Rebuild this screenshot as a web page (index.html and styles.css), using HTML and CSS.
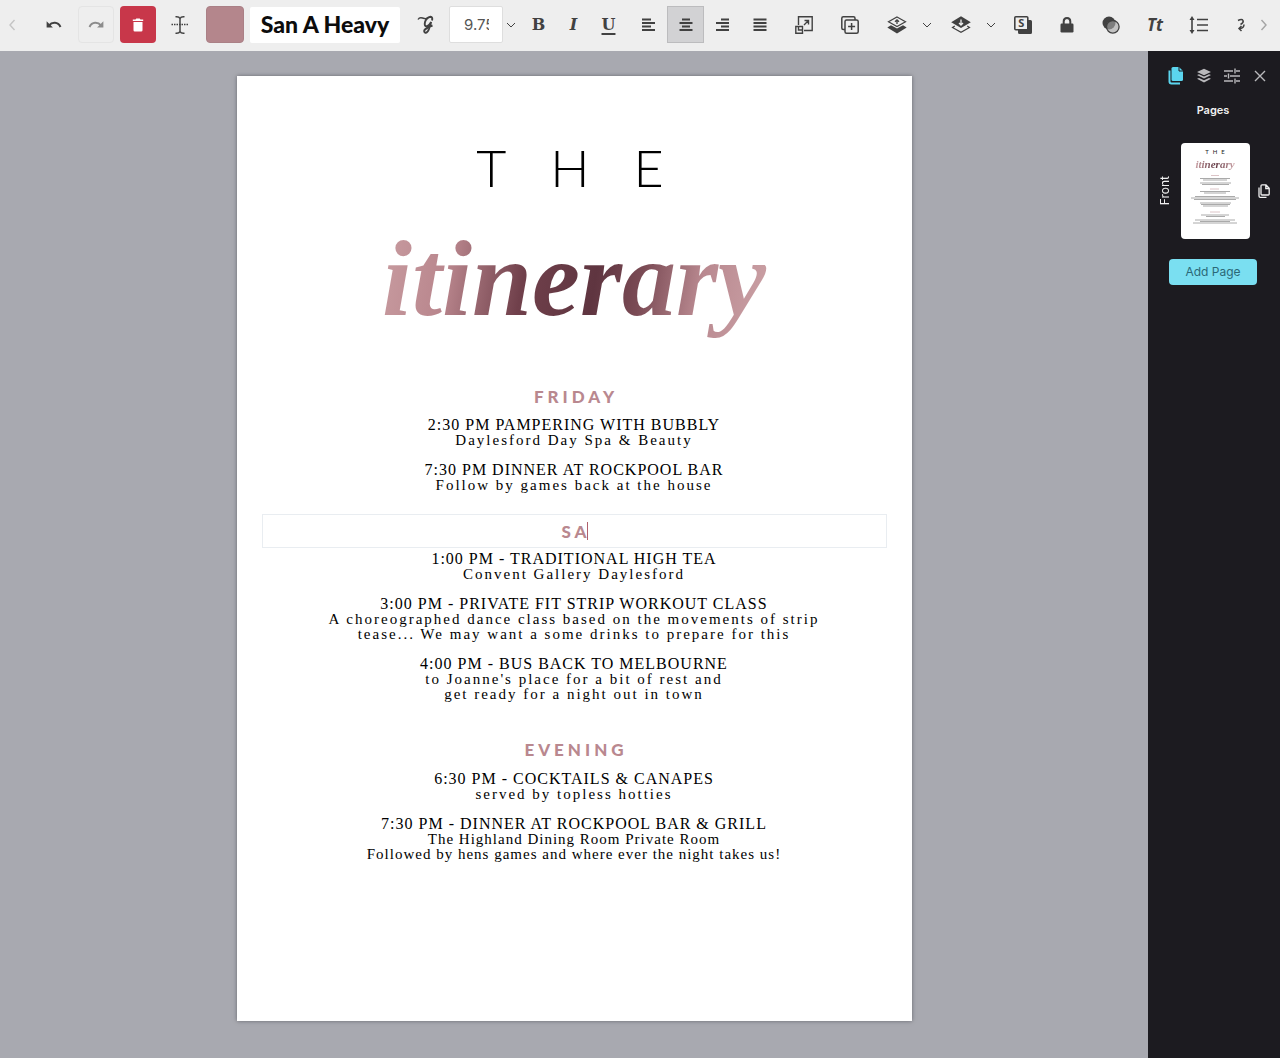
FILE: index.html
```html
<!DOCTYPE html>
<html lang="en">
<head>
<meta charset="utf-8">
<meta name="viewport" content="width=device-width, initial-scale=1">
<title>Itinerary editor</title>
<link rel="stylesheet" href="styles.css">
</head>
<body>
<header class="toolbar">
  <button class="scroll-btn" aria-label="Scroll left"><svg width="8" height="14" viewBox="0 0 8 14"><path d="M6.500 2 2 7l4.500 5" stroke-width="1.400"/></svg></button>
  <div class="group edit">
    <button class="tool" aria-label="Undo"><svg width="16" height="10" viewBox="0 0 16 10"><path d="M3 5.500C6 1.800 12 1.600 14.500 7" stroke-width="2"/><path class="solid" d="M.6 1.200v6.300h6.300z"/></svg></button>
    <button class="tool framed" aria-label="Redo"><svg width="16" height="10" viewBox="0 0 16 10"><path d="M13 5.500C10 1.800 4 1.600 1.500 7" stroke-width="2"/><path class="solid" d="M15.400 1.200v6.300H9.100z"/></svg></button>
    <button class="tool danger" aria-label="Delete"><svg width="12" height="14" viewBox="0 0 12 14"><path class="solid" d="M1.500 4h9v8.200q0 1.300-1.300 1.300H2.800q-1.300 0-1.300-1.300zM.8 1.500H3.500L4.300.5h3.400l.8 1h2.700V3H.8z"/></svg></button>
    <button class="tool" aria-label="Edit text"><svg width="18" height="20" viewBox="0 0 18 20"><path d="M4.500 1.700q3.500-.4 4.500 1.800 1-2.200 4.500-1.800M9 3.500v13M4.500 18.300q3.500.4 4.500-1.800 1 2.200 4.500 1.800" stroke-width="1.500"/><path d="M.5 9.500h17" stroke-width="1.300" stroke-dasharray="1.500 1"/></svg></button>
  </div>
  <button class="swatch" aria-label="Text colour"></button>
  <button class="font-picker">San A Heavy</button>
  <button class="tool glyphs" aria-label="Glyphs"><svg width="18" height="20" viewBox="0 0 18 20"><path d="M1 4.500Q2.500 2 5.500 3T10 3.500" stroke-width="1.400"/><path d="M15 5.500Q16 2 13.500 1.800 9.500 2.500 8 7 7 11.500 9.800 11.300 12.500 10.500 14.200 7L12 14Q10.500 18 8.500 17.800 6.500 17 7.500 15 9.500 12.800 15.500 10.500" stroke-width="1.900"/></svg></button>
  <input class="size-input" type="text" value="9.75" aria-label="Font size">
  <button class="drop" aria-label="Font size list"><svg width="10" height="6" viewBox="0 0 10 6"><path d="m1 1 4 4 4-4"/></svg></button>
  <div class="group style">
    <button class="tool letter" aria-label="Bold">B</button>
    <button class="tool letter slant" aria-label="Italic">I</button>
    <button class="tool letter under" aria-label="Underline">U</button>
  </div>
  <div class="group align">
    <button class="tool" aria-label="Align left"><svg width="14" height="14" viewBox="0 0 14 14"><path d="M0 1.500h9M0 5h13M0 8.500h9M0 12h13" stroke-width="1.800"/></svg></button>
    <button class="tool active" aria-label="Align centre" aria-pressed="true"><svg width="14" height="14" viewBox="0 0 14 14"><path d="M3 1.500h8M.5 5h13M3 8.500h8M.5 12h13" stroke-width="1.800"/></svg></button>
    <button class="tool" aria-label="Align right"><svg width="14" height="14" viewBox="0 0 14 14"><path d="M5 1.500h8M0 5h13M5 8.500h8M0 12h13" stroke-width="1.800"/></svg></button>
    <button class="tool" aria-label="Justify"><svg width="14" height="14" viewBox="0 0 14 14"><path d="M.5 1.500h13M.5 5h13M.5 8.500h13M.5 12h13" stroke-width="1.800"/></svg></button>
  </div>
  <button class="tool resize" aria-label="Resize"><svg width="18" height="18" viewBox="0 0 18 18"><path d="M3.500 9V.8H17.200v13.700H9M.8 10.500h6.700v6.700H.8zM3.500 10.500v3.500H7.500M9 9l4.500-4.500M9.500 4.500h4v4" stroke-width="1.400"/></svg></button>
  <button class="tool duplicate" aria-label="Duplicate"><svg width="18" height="18" viewBox="0 0 18 18"><path d="M3.500 13.500H2.300Q.8 13.500.8 12V2.300Q.8.800 2.300.8H12.500q1.500 0 1.500 1.500v1.200M5.500 4h10q1.700 0 1.700 1.500v10.200q0 1.500-1.700 1.500h-10Q4 17.200 4 15.700V5.500Q4 4 5.500 4zM10.600 7v7M7.100 10.500h7" stroke-width="1.500"/></svg></button>
  <div class="group arrange">
    <button class="tool" aria-label="Bring forward"><svg width="20" height="18" viewBox="0 0 20 18"><path class="solid" d="M.3 11.500 4 9.300 10 12.400l6-3.100 3.700 2.200L10 17.500z"/><path d="M10 1 18.500 5.800 10 10.500 1.500 5.800z" stroke-width="1.200"/><path d="M10 8V4M8 5.800l2-2 2 2" stroke-width="1.300"/></svg></button>
    <button class="drop" aria-label="Forward options"><svg width="10" height="6" viewBox="0 0 10 6"><path d="m1 1 4 4 4-4"/></svg></button>
    <button class="tool" aria-label="Send backward"><svg width="20" height="18" viewBox="0 0 20 18"><path d="M3.800 10 1.500 11.500l8.500 4.800 8.500-4.800L16.200 10" stroke-width="1.200"/><path class="solid" d="M10 .3 19.800 6.200 10 12 .2 6.200z"/><path class="knock" d="M10 3.500v5M8 7l2 2 2-2"/></svg></button>
    <button class="drop" aria-label="Backward options"><svg width="10" height="6" viewBox="0 0 10 6"><path d="m1 1 4 4 4-4"/></svg></button>
  </div>
  <div class="group extras">
    <button class="tool" aria-label="Shadow"><svg width="18" height="18" viewBox="0 0 18 18"><path class="solid" d="M4 14h10V4h2.500Q18 4 18 5.500v11q0 1.500-1.500 1.500h-11Q4 18 4 16.500z"/><rect x=".8" y=".8" width="13" height="13" rx="1" stroke-width="1.600"/><text x="7.300" y="11.300" text-anchor="middle" class="badge-s">S</text></svg></button>
    <button class="tool" aria-label="Lock"><svg width="14" height="16" viewBox="0 0 14 16"><rect class="solid" x=".5" y="6.500" width="13" height="9" rx="1.200"/><path d="M3.700 7V4.500Q3.700 1 7 1t3.300 3.500V7" stroke-width="2"/></svg></button>
    <button class="tool" aria-label="Opacity"><svg width="18" height="18" viewBox="0 0 18 18"><circle class="solid" cx="7" cy="7" r="6.500"/><circle class="mesh" cx="10.800" cy="10.800" r="6.300"/></svg></button>
    <button class="tool case" aria-label="Text case">Tt</button>
    <button class="tool" aria-label="Line spacing"><svg width="20" height="18" viewBox="0 0 20 18"><path d="M3 3v12M8 3.500h11M8 9h11M8 14.500h11" stroke-width="1.600"/><path class="solid" d="M3 0 5.500 4h-5zM3 18l2.500-4h-5z"/></svg></button>
  </div>
  <button class="clipped" aria-label="Rotate"><svg width="8" height="14" viewBox="0 0 8 14"><path d="M1 2.500Q5 .5 6 2.500T3.500 6.500M3 10.500Q7 10 7 6.500M4.500 8 2 10.500 4.500 13" stroke-width="1.500"/></svg></button>
  <button class="scroll-btn end" aria-label="Scroll right"><svg width="8" height="14" viewBox="0 0 8 14"><path d="M1.500 2 6 7l-4.500 5" stroke-width="1.400"/></svg></button>
</header>
<div class="editor">
  <main class="workspace">
    <article class="page">
      <h1 class="title"><span class="the">THE</span><span class="script">itinerary</span></h1>
      <h2 class="day">FRIDAY</h2>
      <section class="events">
        <p><span class="slot">2:30 PM PAMPERING WITH BUBBLY</span><br>Daylesford Day Spa &amp; Beauty</p>
        <p><span class="slot">7:30 PM DINNER AT ROCKPOOL BAR</span><br>Follow by games back at the house</p>
      </section>
      <div class="editing">
        <input class="day-input" type="text" value="SA" aria-label="Heading text">
        <span class="caret"></span>
      </div>
      <section class="events">
        <p><span class="slot">1:00 PM - TRADITIONAL HIGH TEA</span><br>Convent Gallery Daylesford</p>
        <p><span class="slot">3:00 PM - PRIVATE FIT STRIP WORKOUT CLASS</span><br>A choreographed dance class based on the movements of strip<br>tease... We may want a some drinks to prepare for this</p>
        <p><span class="slot">4:00 PM - BUS BACK TO MELBOURNE</span><br>to Joanne's place for a bit of rest and<br>get ready for a night out in town</p>
      </section>
      <h2 class="day evening">EVENING</h2>
      <section class="events">
        <p><span class="slot">6:30 PM - COCKTAILS &amp; CANAPES</span><br>served by topless hotties</p>
        <p><span class="slot">7:30 PM - DINNER AT ROCKPOOL BAR &amp; GRILL</span><br><span class="fine">The Highland Dining Room Private Room<br>Followed by hens games and where ever the night takes us!</span></p>
      </section>
    </article>
  </main>
  <aside class="panel">
    <nav class="tabs">
      <button class="tab current" aria-label="Pages"><svg width="16" height="18" viewBox="0 0 16 18"><path class="solid" d="M5 0h6l4 4v8.500q0 1.500-1.500 1.500H5q-1.500 0-1.500-1.500v-11Q3.500 0 5 0z"/><path d="M1.500 3.500v11q0 2 2 2H12" stroke-width="2"/><path class="fold" d="M11 0v4h4"/></svg></button>
      <button class="tab" aria-label="Layers"><svg width="14" height="16" viewBox="0 0 14 16"><path class="solid" d="M7 .8 14 4 7 7.200 0 4zM0 7l2-.8 5 2.300 5-2.300 2 .8-7 3.600zM0 10.800l2-.8 5 2.300 5-2.300 2 .8-7 3.800z"/></svg></button>
      <button class="tab" aria-label="Settings"><svg width="16" height="16" viewBox="0 0 16 16"><path d="M0 3h9M12 3h4M0 8h3M6 8h10M0 13h9M12 13h4M11 .5v5M4.500 5.500v5M11 10.500v5" stroke-width="1.400"/></svg></button>
      <button class="tab" aria-label="Close"><svg width="12" height="12" viewBox="0 0 12 12"><path d="m1 1 10 10M11 1 1 11" stroke-width="1.400"/></svg></button>
    </nav>
    <h2 class="panel-title">Pages</h2>
    <div class="page-row">
      <span class="side-label">Front</span>
      <button class="thumb" aria-label="Front page">
        <span class="mini-the">THE</span>
        <span class="mini-script">itinerary</span>
        <svg class="mini-lines" width="50" height="50" viewBox="0 0 50 50"><path class="rose" d="M21 1.500h8M20 15h9M20 38h10"/><path d="M10 4.500h30M13 6h24M10 9h31M12 10.500h27M10 17.500h30M14 19h22M5 22.500h40M1 24h48M4 25.500h42M10 29h31M11 30.500h29M13 32h25M11 41h28M16 42.500h19M5 46h40M10 47.500h30M3 49h44"/></svg>
      </button>
      <button class="copy-page" aria-label="Duplicate page"><svg width="12" height="14" viewBox="0 0 12 14"><path d="M4 .8h4l3.200 3.400V10q0 1-1 1H4Q3 11 3 10V1.800q0-1 1-1zM7.800 1v3.500H11M1 3.500V12q0 1.300 1.300 1.300H8.500" stroke-width="1.300"/></svg></button>
    </div>
    <button class="add-page">Add Page</button>
  </aside>
</div>
</body>
</html>
```
FILE: styles.css
```css
* { box-sizing: border-box; }
body {
  margin: 0;
  min-height: 100vh;
  display: flex;
  flex-direction: column;
  font-family: Inter, "Liberation Sans", sans-serif;
  background: #a8a9b0;
}
button {
  display: flex;
  align-items: center;
  justify-content: center;
  flex: none;
  padding: 0;
  border: 0;
  background: none;
  color: inherit;
  font: inherit;
}
svg { fill: none; stroke: currentColor; flex: none; }
.solid { fill: currentColor; stroke: none; }
h1, h2, p { margin: 0; }

/* Toolbar */
.toolbar {
  display: flex;
  align-items: center;
  height: 51px;
  padding: 0 10px 2px 8px;
  background: #eeeeee;
  color: #414141;
  overflow: hidden;
}
.group { display: flex; align-items: center; flex: none; }
.tool { width: 36px; height: 37px; border-radius: 4px; }
.scroll-btn { width: 8px; height: 36px; color: #c4c4c4; }
.scroll-btn.end { margin-left: auto; width: 12px; color: #a4a4a4; }
.edit { gap: 6px; margin-left: 20px; }
.framed { border: 1px solid #e4e4e4; color: #8c8c8c; }
.danger { background: #c8374a; color: #fff; }
.swatch { width: 38px; height: 37px; margin-left: 8px; border: 1px solid #aa8086; border-radius: 4px; background: #b4868c; }
.font-picker {
  width: 150px;
  height: 36px;
  margin-left: 6px;
  padding-bottom: 2px;
  border-radius: 2px;
  background: #fff;
  color: #0c0c0c;
  font: 900 23px/34px Lato, sans-serif;
  white-space: nowrap;
}
.glyphs { margin-left: 8px; }
.size-input {
  flex: none;
  width: 54px;
  height: 37px;
  margin-left: 5px;
  padding: 0 13px 0 14px;
  border: 1px solid #dedede;
  border-radius: 2px;
  background: #fff;
  color: #555;
  font: 15px/20px Inter, sans-serif;
}
.drop { width: 16px; height: 36px; }
.style { margin-left: 2px; }
.style .tool { width: 35px; }
.letter { font: bold 16px/20px "DejaVu Serif", serif; }
.slant { font-style: italic; }
.under { text-decoration: underline; text-decoration-thickness: 2px; text-underline-offset: 3px; }
.align { margin-left: 4px; }
.align .tool { width: 37px; border-radius: 0; }
.align .active { background: #d2d2d4; border: 1px solid #bcbcbe; }
.resize { margin-left: 8px; }
.duplicate { margin-left: 10px; }
.arrange { gap: 4px; margin-left: 11px; }
.arrange .drop + .tool { margin-left: 4px; }
.knock { stroke: #eee; stroke-width: 1.3; }
.extras { gap: 8px; margin-left: 6px; }
.badge-s { fill: currentColor; stroke: none; font: bold 11px "Open Sans", sans-serif; }
.mesh { fill: #a5a5a5; fill-opacity: .6; stroke-width: 1.3; }
.case { font: italic bold 17px/20px "Open Sans", sans-serif; }
.clipped { width: 14px; height: 36px; margin-left: 17px; }

/* Canvas */
.editor { display: flex; flex: 1; }
.workspace { flex: 1; min-width: 0; padding: 25px 16px 37px; background: #a8a9b0; }
.page {
  display: flex;
  flex-direction: column;
  max-width: 675px;
  min-height: 945px;
  margin: 0 auto;
  padding: 0 25px;
  background: #fff;
  box-shadow: 0 0 4px #66676d;
  text-align: center;
}
.title { display: flex; flex-direction: column; align-items: center; font-weight: normal; }
.the { margin-top: 61px; padding-left: 36px; font: 300 52px/60px Lato, sans-serif; letter-spacing: 44px; color: #000; }
.script {
  padding: 0 8px;
  font: italic bold 108px/164px "Liberation Serif", serif;
  color: transparent;
  background: linear-gradient(100deg, #cba0a4 0%, #b9868d 20%, #70404b 38%, #5f3540 55%, #7b4b55 66%, #b98990 80%, #cea5a9 100%);
  -webkit-background-clip: text;
  background-clip: text;
}
.day {
  margin-top: 26px;
  padding-left: 4px;
  font: 900 17px/20px Lato, sans-serif;
  letter-spacing: 4px;
  color: #b9888f;
}
.events {
  display: flex;
  flex-direction: column;
  gap: 14px;
  margin-top: 10px;
  font: 15px/15px "Liberation Serif", serif;
  letter-spacing: 2px;
  color: #000;
}
.slot { font-size: 16px; letter-spacing: 1px; }
.editing { position: relative; margin-top: 21px; }
.day-input {
  display: block;
  width: 100%;
  height: 34px;
  padding: 0 0 0 4px;
  border: 1px solid #e9edf1;
  background: none;
  text-align: center;
  font: 900 17px/20px Lato, sans-serif;
  letter-spacing: 4px;
  color: #b9888f;
}
.caret { position: absolute; left: calc(50% + 13px); top: 8px; width: 1px; height: 18px; background: #b0606c; }
.editing + .events { margin-top: 3px; }
.evening { margin-top: 38px; }
.evening + .events { margin-top: 11px; }
.fine { letter-spacing: 1px; }

/* Pages panel */
.panel {
  display: flex;
  flex-direction: column;
  align-items: center;
  flex: none;
  width: 132px;
  padding: 14px 2px 14px 0;
  background: #1c1b20;
  color: #f0f0f0;
}
.tabs { display: flex; gap: 4px; padding-left: 9px; }
.tab { width: 24px; height: 22px; color: #b9b9bc; }
.current { color: #5bd5ee; }
.fold { stroke: #1c1b20; }
.panel-title { margin-top: 15px; font: 600 11px/16px Inter, sans-serif; }
.page-row { display: flex; align-items: center; gap: 8px; margin-top: 25px; }
.side-label { writing-mode: vertical-rl; transform: rotate(180deg); font-size: 12px; line-height: 16px; }
.thumb {
  flex-direction: column;
  justify-content: flex-start;
  width: 69px;
  height: 96px;
  padding-top: 5px;
  border-radius: 4px;
  background: #fff;
}
.mini-the { padding-left: 4px; font: 6px/8px Lato, sans-serif; letter-spacing: 4px; color: #222; }
.mini-script {
  font: italic bold 11px/16px "Liberation Serif", serif;
  color: transparent;
  background: linear-gradient(90deg, #cba0a4, #5f3540 50%, #cea5a9);
  -webkit-background-clip: text;
  background-clip: text;
}
.mini-lines { margin-top: 2px; stroke: #aaa; stroke-width: 1; }
.rose { stroke: #dcc4c7; }
.copy-page { width: 12px; height: 20px; }
.add-page {
  width: 88px;
  height: 26px;
  margin-top: 20px;
  border-radius: 4px;
  background: #7adff1;
  color: #2b6877;
  font-size: 12px;
  line-height: 16px;
}
```
